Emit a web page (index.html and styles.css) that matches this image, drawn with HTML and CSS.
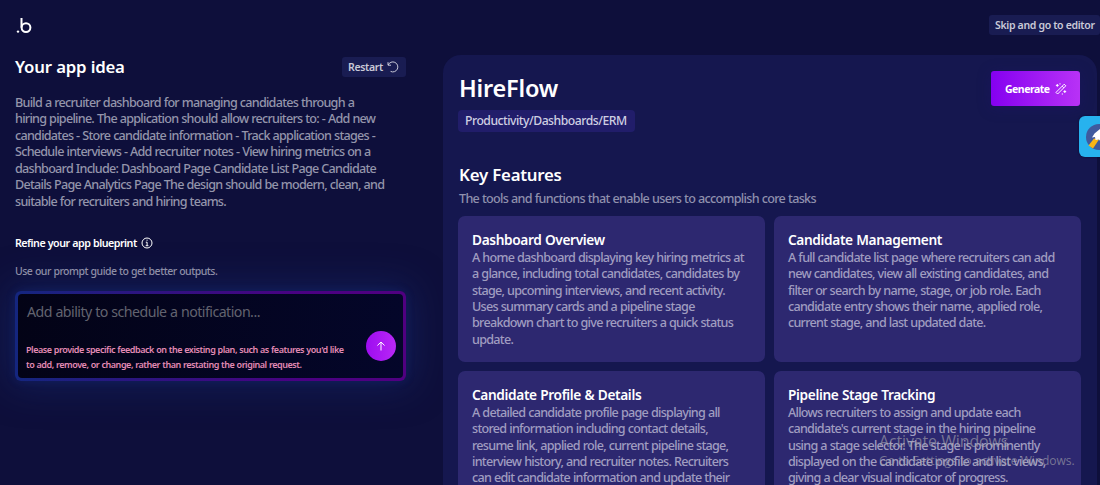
FILE: index.html
```html
<!DOCTYPE html>
<html lang="en">
<head>
    <meta charset="UTF-8">
    <meta name="viewport" content="width=device-width, initial-scale=1.0">
    <title>HireFlow</title>
    <link rel="stylesheet" href="styles.css">
</head>
<body>
    <header class="topbar">
        <svg class="logo" width="16" height="18" viewBox="0 0 16 18" fill="none" stroke="#fff" stroke-width="2">
            <circle cx="2" cy="14.6" r="1.2" fill="#fff" stroke="none"/>
            <path d="M5.500 1v9.5"/>
            <circle cx="10" cy="10.600" r="4.4"/>
        </svg>
        <button class="small-btn skip">Skip and go to editor</button>
    </header>

    <main class="layout">
        <section class="sidebar">
            <div class="idea-head">
                <h2>Your app idea</h2>
                <button class="small-btn restart">Restart
                    <svg width="12" height="12" viewBox="0 0 12 12" fill="none" stroke="currentColor" stroke-width="1">
                        <path d="M1 1.2v3h3M1.2 4A5 5 0 1 1 3.6 10.4"/>
                    </svg>
                </button>
            </div>
            <p class="idea">Build a recruiter dashboard for managing candidates through a<br>hiring pipeline. The application should allow recruiters to: - Add new<br>candidates - Store candidate information - Track application stages -<br>Schedule interviews - Add recruiter notes - View hiring metrics on a<br>dashboard Include: Dashboard Page Candidate List Page Candidate<br>Details Page Analytics Page The design should be modern, clean, and<br>suitable for recruiters and hiring teams.</p>
            <h3 class="refine">Refine your app blueprint
                <svg width="12" height="12" viewBox="0 0 12 12" fill="none" stroke="currentColor">
                    <circle cx="6" cy="6" r="5"/>
                    <path d="M4.8 5.2H6.1V8.6M4.7 8.7h2.7M5.5 3.2h1.1"/>
                </svg>
            </h3>
            <p class="guide">Use our prompt guide to get better outputs.</p>
            <div class="prompt">
                <div class="prompt-inner">
                    <p class="placeholder">Add ability to schedule a notification...</p>
                    <div class="prompt-foot">
                        <p class="error">Please provide specific feedback on the existing plan, such as features you'd like<br>to add, remove, or change, rather than restating the original request.</p>
                        <button class="send">
                            <svg width="10" height="10" viewBox="0 0 10 10" fill="none" stroke="#fff" stroke-width="1">
                                <path d="M5 9.5V1M1.4 4.5L5 1l3.6 3.5"/>
                            </svg>
                        </button>
                    </div>
                </div>
            </div>
        </section>

        <section class="panel">
            <div class="panel-head">
                <div>
                    <h1>HireFlow</h1>
                    <span class="tag">Productivity/Dashboards/ERM</span>
                </div>
                <button class="generate">Generate
                    <svg width="12" height="12" viewBox="0 0 12 12" fill="none" stroke="#fff" stroke-width="1" stroke-linejoin="round">
                        <path d="M1 9.4L9.2 1.2l1.6 1.6L2.6 11zM7.2 3.2l1.6 1.6"/>
                        <path d="M2.3 1v2.8M.9 2.4h2.8M9.8 7.2V10M8.4 8.6h2.8M5 .3v1.2M7.3 10.4v1.2"/>
                    </svg>
                </button>
            </div>
            <h2 class="section-title">Key Features</h2>
            <p class="section-sub">The tools and functions that enable users to accomplish core tasks</p>
            <div class="cards">
                <article class="card">
                    <h3>Dashboard Overview</h3>
                    <p>A home dashboard displaying key hiring metrics at<br>a glance, including total candidates, candidates by<br>stage, upcoming interviews, and recent activity.<br>Uses summary cards and a pipeline stage<br>breakdown chart to give recruiters a quick status<br>update.</p>
                </article>
                <article class="card">
                    <h3>Candidate Management</h3>
                    <p>A full candidate list page where recruiters can add<br>new candidates, view all existing candidates, and<br>filter or search by name, stage, or job role. Each<br>candidate entry shows their name, applied role,<br>current stage, and last updated date.</p>
                </article>
                <article class="card">
                    <h3>Candidate Profile &amp; Details</h3>
                    <p>A detailed candidate profile page displaying all<br>stored information including contact details,<br>resume link, applied role, current pipeline stage,<br>interview history, and recruiter notes. Recruiters<br>can edit candidate information and update their</p>
                </article>
                <article class="card">
                    <h3>Pipeline Stage Tracking</h3>
                    <p>Allows recruiters to assign and update each<br>candidate's current stage in the hiring pipeline<br>using a stage selector. The stage is prominently<br>displayed on the candidate profile and list views,<br>giving a clear visual indicator of progress.</p>
                </article>
            </div>
        </section>
    </main>

    <div class="side-widget">
        <svg width="26" height="26" viewBox="0 0 26 26">
            <circle cx="13" cy="13" r="13" fill="#3f5a9e"/>
            <path d="M2.500 21.500L8 14.500l5 1-6 9z" fill="#f9b516"/>
            <path d="M6 13.500l2.500-4L14 5l8 1-1 8-5 5-3-3.500-3.500.5-.500-3z" fill="#fff"/>
        </svg>
    </div>
    <div class="watermark">
        <p class="wm-title">Activate Windows</p>
        <p class="wm-text">Go to Settings to activate Windows.</p>
    </div>
</body>
</html>
```
FILE: styles.css
```css
* {
    box-sizing: border-box;
}

body {
    margin: 0;
    height: 485px;
    overflow: hidden;
    position: relative;
    background: #0e0f3b;
    color: #fff;
    font-family: "Noto Sans", sans-serif;
    font-size: 12.6px;
    line-height: 16.45px;
    letter-spacing: -0.7px;
    word-spacing: 0.3px;
}

h1, h2, h3, p {
    margin: 0;
    white-space: nowrap;
}

button {
    border: none;
    padding: 0;
    font-family: inherit;
    color: #fff;
    cursor: pointer;
}

.topbar {
    display: flex;
    justify-content: space-between;
    align-items: flex-start;
    height: 55px;
    padding: 15px 0 0 16px;
}

.logo {
    margin-top: 2px;
}

.small-btn {
    display: flex;
    align-items: center;
    height: 20px;
    padding-bottom: 1px;
    border-radius: 3px;
    background: #191c52;
    color: #c9c9d8;
    font-size: 10.5px;
    font-weight: 600;
    letter-spacing: -0.33px;
    white-space: nowrap;
}

.skip {
    width: 111px;
    padding-left: 6px;
}

.restart {
    width: 64px;
    padding-left: 6px;
    gap: 4px;
}

.layout {
    display: flex;
    align-items: flex-start;
    gap: 37px;
    padding-left: 15px;
}

.sidebar {
    width: 391px;
    flex-shrink: 0;
}

.idea-head {
    display: flex;
    justify-content: space-between;
    align-items: center;
    height: 24px;
}

.idea-head h2 {
    font-size: 16.8px;
    font-weight: 600;
    letter-spacing: -0.23px;
}

.idea {
    margin-top: 16px;
    color: #9495ab;
    font-weight: 500;
    letter-spacing: -0.74px;
}

.refine {
    display: flex;
    align-items: center;
    gap: 4px;
    margin-top: 24px;
    height: 18px;
    font-size: 10.7px;
    font-weight: 600;
    letter-spacing: -0.5px;
}

.guide {
    margin-top: 11px;
    height: 16px;
    color: #8e8fa7;
    font-size: 10.5px;
    font-weight: 500;
    letter-spacing: -0.5px;
}

.prompt {
    margin-top: 12px;
    height: 90px;
    padding: 3px;
    border-radius: 6px;
    background: linear-gradient(90deg, #14267f, #2b1580 30%, #4b0082 75%, #500080);
    box-shadow: 0 0 8px rgba(28, 50, 150, 0.3), 0 0 36px 5px rgba(22, 42, 112, 0.55);
}

.prompt-inner {
    height: 84px;
    padding: 9px 7px 0 8px;
    border-radius: 4px;
    background: linear-gradient(100deg, #030316, #04062a);
}

.placeholder {
    padding-left: 1px;
    color: #62636f;
    font-size: 14.2px;
    line-height: 18px;
    letter-spacing: -0.53px;
}

.prompt-foot {
    display: flex;
    justify-content: space-between;
    align-items: flex-start;
    margin-top: 10px;
}

.error {
    margin-top: 11px;
    color: #e38bb5;
    font-size: 9px;
    line-height: 15px;
    font-weight: 600;
    letter-spacing: -0.45px;
}

.send {
    display: flex;
    align-items: center;
    justify-content: center;
    width: 30px;
    height: 30px;
    border-radius: 50%;
    background: linear-gradient(90deg, #9d0cf0, #b928f6);
}

.panel {
    width: 654px;
    height: 430px;
    overflow: hidden;
    padding: 16px 17px 0 15px;
    border-radius: 18px 18px 0 0;
    background: #15174f;
}

.panel-head {
    display: flex;
    justify-content: space-between;
    align-items: flex-start;
    height: 94px;
}

h1 {
    height: 39px;
    padding-left: 1px;
    font-size: 23.5px;
    font-weight: 600;
    line-height: 35px;
    letter-spacing: -0.2px;
}

.tag {
    display: flex;
    align-items: center;
    width: 177px;
    height: 22px;
    padding-left: 7px;
    border-radius: 4px;
    background: #211d6a;
    color: #cfcfe2;
    font-size: 12.2px;
    font-weight: 500;
    letter-spacing: -0.48px;
}

.generate {
    display: flex;
    align-items: center;
    gap: 5px;
    width: 89px;
    height: 35px;
    padding-left: 14px;
    border-radius: 3px;
    background: linear-gradient(90deg, #8500f0, #b832f6);
    box-shadow: 0 2px 14px rgba(30, 20, 110, 0.4);
    font-size: 10.5px;
    font-weight: 700;
    letter-spacing: -0.5px;
}

.section-title {
    height: 26px;
    padding-left: 1px;
    font-size: 16.8px;
    font-weight: 600;
    line-height: 20px;
    letter-spacing: -0.23px;
}

.section-sub {
    height: 25px;
    padding-left: 1px;
    color: #8f90ad;
    font-weight: 500;
}

.cards {
    display: grid;
    grid-template-columns: 307px 307px;
    grid-auto-rows: 146px;
    gap: 9px;
}

.card {
    padding: 15px 14px 0;
    border-radius: 7px;
    background: #2d2870;
}

.card h3 {
    font-size: 13.7px;
    font-weight: 600;
    line-height: 17px;
    letter-spacing: -0.37px;
}

.card p {
    padding-top: 1.6px;
    color: #a09dc0;
    font-weight: 500;
    letter-spacing: -0.73px;
}

/* floats over the right edge */
.side-widget {
    position: absolute;
    top: 116px;
    left: 1079px;
    width: 40px;
    height: 41px;
    padding: 8px 7px;
    border-radius: 6px;
    background: #27b2ee;
    box-shadow: 0 0 2px #080a2c;
}

.watermark {
    position: absolute;
    top: 431px;
    left: 879px;
    color: rgba(170, 170, 175, 0.6);
    font-family: "Open Sans", sans-serif;
    letter-spacing: -0.15px;
}

.wm-title {
    font-size: 16px;
    line-height: 21px;
}

.wm-text {
    font-size: 12.1px;
    line-height: 17px;
    letter-spacing: -0.12px;
}
```
